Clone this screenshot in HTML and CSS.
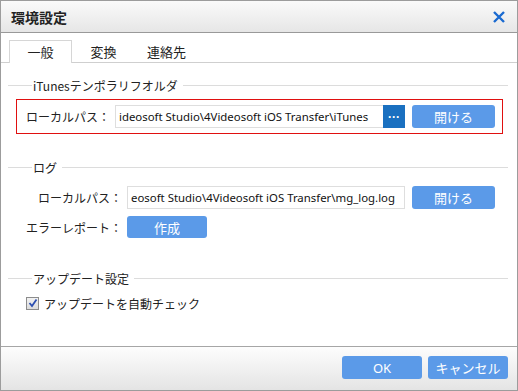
FILE: index.html
```html
<!DOCTYPE html>
<html lang="ja">
<head>
    <meta charset="UTF-8">
    <title>環境設定</title>
    <link rel="stylesheet" href="styles.css">
</head>
<body>
    <div class="window">
        <div class="titlebar">
            <span class="title">環境設定</span>
            <svg class="close" width="14" height="14" viewBox="0 0 14 14">
                <path d="M2 2 L12 12 M12 2 L2 12" stroke="#1a6ad0" stroke-width="2.4" fill="none"/>
            </svg>
        </div>

        <div class="tabs">
            <div class="tab active">一般</div>
            <div class="tab">変換</div>
            <div class="tab">連絡先</div>
        </div>

        <div class="content">
            <div class="legend first"><span>iTunesテンポラリフオルダ</span></div>
            <div class="row highlight">
                <label class="label">ローカルパス：</label>
                <div class="path itunes">ideosoft Studio\4Videosoft iOS Transfer\iTunes</div>
                <button class="browse">···</button>
                <button class="btn open">開ける</button>
            </div>

            <div class="legend log"><span>ログ</span></div>
            <div class="row log-row">
                <label class="label log-label">ローカルパス：</label>
                <div class="path logfile">eosoft Studio\4Videosoft iOS Transfer\mg_log.log</div>
                <button class="btn open">開ける</button>
            </div>
            <div class="row report-row">
                <label class="label report-label">エラーレポート：</label>
                <button class="btn create">作成</button>
            </div>

            <div class="legend update"><span>アップデート設定</span></div>
            <div class="check-row">
                <span class="checkbox">
                    <svg width="10" height="10" viewBox="0 0 10 10">
                        <path d="M1.5 5 L4 8 L8.5 1.5" stroke="#2d4fb0" stroke-width="1.8" fill="none"/>
                    </svg>
                </span>
                <span>アップデートを自動チェック</span>
            </div>
        </div>

        <div class="footer">
            <button class="btn footer-btn">OK</button>
            <button class="btn footer-btn">キャンセル</button>
        </div>
    </div>
</body>
</html>
```

FILE: styles.css
```css
body {
    margin: 0;
    font-family: "Noto Sans CJK JP", "Noto Sans", sans-serif;
    font-size: 12px;
    color: #222;
}
.window {
    width: 518px;
    height: 391px;
    box-sizing: border-box;
    border: 1px solid #9c9c9c;
    display: flex;
    flex-direction: column;
    background: white;
}
.titlebar {
    height: 31px;
    border-bottom: 1px solid #999;
    background: linear-gradient(#fafafa, #e6e6e6);
    display: flex;
    align-items: center;
    justify-content: space-between;
    padding: 0 11px 0 10px;
}
.title {
    font-size: 14px;
    font-weight: bold;
    color: #222;
}
.close {
    display: block;
}
.tabs {
    display: flex;
    padding: 7px 0 0 8px;
    border-bottom: 1px solid #cfcfcf;
}
.tab {
    width: 63px;
    height: 23px;
    line-height: 22px;
    text-align: center;
    font-size: 13px;
    color: #222;
    border: 1px solid transparent;
    border-bottom: none;
    margin-bottom: -1px;
    box-sizing: border-box;
}
.tab.active {
    border-color: #d6d6d6;
    background: white;
}
.content {
    flex: 1;
    padding: 0 9px 0 7px;
}
.legend {
    display: flex;
    align-items: center;
    height: 14px;
    color: #222;
}
.legend::before {
    content: "";
    width: 24px;
    border-top: 1px solid #dcdcdc;
}
.legend::after {
    content: "";
    flex: 1;
    border-top: 1px solid #dcdcdc;
}
.legend span {
    padding: 0 5px 0 1px;
}
.legend.first {
    margin-top: 15px;
}
.legend.log {
    margin-top: 26px;
}
.legend.update {
    margin-top: 33px;
}
.row {
    display: flex;
    align-items: center;
}
.highlight {
    margin: 7px 5px 0 8px;
    border: 1px solid #e01010;
    padding: 5px 0 5px 9px;
}
.label {
    width: 89px;
    flex-shrink: 0;
    box-sizing: border-box;
}
.log-row {
    margin-top: 12px;
}
.log-label {
    width: 119px;
    padding-left: 30px;
}
.report-row {
    margin-top: 7px;
}
.report-label {
    width: 119px;
    padding-left: 18px;
}
.path {
    height: 23px;
    line-height: 22px;
    box-sizing: border-box;
    border: 1px solid #dedede;
    border-right: none;
    padding-left: 3px;
    white-space: nowrap;
    overflow: hidden;
    font-family: "Noto Sans", sans-serif;
    font-size: 11.4px;
    color: #111;
}
.itunes {
    width: 268px;
}
.logfile {
    width: 278px;
    border-right: 1px solid #dedede;
}
.browse {
    width: 22px;
    height: 23px;
    border: none;
    padding: 0;
    background: #1a70c0;
    color: white;
    font-size: 12px;
    font-weight: bold;
    line-height: 20px;
}
.btn {
    height: 23px;
    border: none;
    border-radius: 3px;
    background: #5b9ae8;
    color: white;
    font-family: "Noto Sans CJK JP", sans-serif;
    font-size: 13px;
    padding: 0;
}
.open {
    width: 83px;
    margin-left: 7px;
}
.create {
    width: 80px;
    height: 22px;
}
.check-row {
    display: flex;
    align-items: center;
    margin: 11px 0 0 18px;
    height: 14px;
}
.checkbox {
    width: 11px;
    height: 11px;
    border: 1px solid #8c8c8c;
    background: linear-gradient(#f2f2f2, #dcdcdc);
    display: flex;
    align-items: center;
    justify-content: center;
    margin-right: 5px;
}
.footer {
    height: 44px;
    box-sizing: border-box;
    border-top: 1px solid #a6a6a6;
    background: linear-gradient(#fdfdfd, #e4e4e4);
    display: flex;
    justify-content: flex-end;
    align-items: flex-start;
    padding: 9px 9px 0 0;
    gap: 6px;
}
.footer-btn {
    width: 80px;
    height: 23px;
    font-family: "Noto Sans", "Noto Sans CJK JP", sans-serif;
}
```
